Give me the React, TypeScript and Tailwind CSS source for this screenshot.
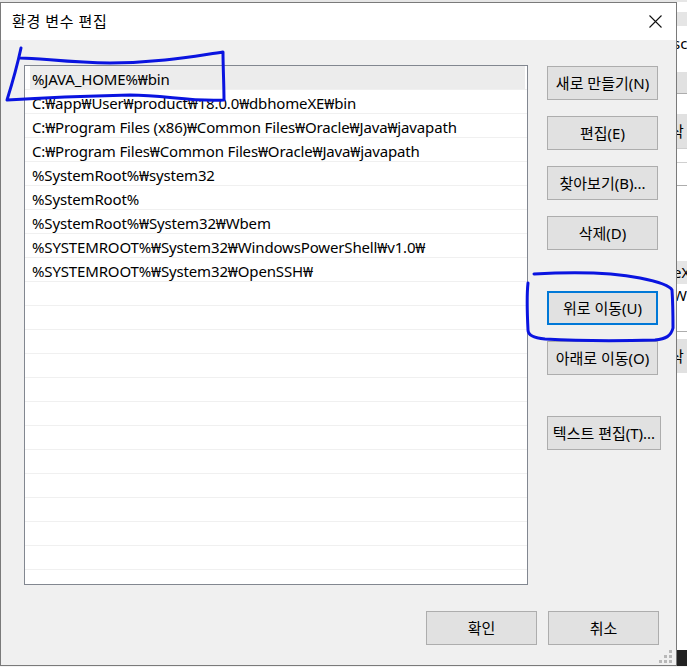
import React from "react";

const items = [
  "%JAVA_HOME%₩bin",
  "C:₩app₩User₩product₩18.0.0₩dbhomeXE₩bin",
  "C:₩Program Files (x86)₩Common Files₩Oracle₩Java₩javapath",
  "C:₩Program Files₩Common Files₩Oracle₩Java₩javapath",
  "%SystemRoot%₩system32",
  "%SystemRoot%",
  "%SystemRoot%₩System32₩Wbem",
  "%SYSTEMROOT%₩System32₩WindowsPowerShell₩v1.0₩",
  "%SYSTEMROOT%₩System32₩OpenSSH₩",
];

const rows = [...items, ...Array(13).fill("")];

function Btn({
  children,
  className = "",
  focused = false,
}: {
  children: React.ReactNode;
  className?: string;
  focused?: boolean;
}) {
  return (
    <button
      className={
        "h-[34px] bg-[#e1e1e1] text-[15px] leading-none text-black flex items-center justify-center whitespace-nowrap " +
        (focused ? "border-2 border-[#0078d7] " : "border border-[#adadad] ") +
        className
      }
    >
      {children}
    </button>
  );
}

export default function App() {
  return (
    <div
      className="relative w-[687px] h-[667px] overflow-hidden bg-[#f3f3f3] text-black"
      style={{ fontFamily: "'Noto Sans', 'Noto Sans CJK KR', sans-serif" }}
    >
      <div className="h-[2px] bg-[#e6e6e6]" />
      <div className="flex">
        {/* dialog */}
        <div className="relative w-[677px] h-[664px] border border-[#7a7a7a] bg-[#f0f0f0] flex flex-col">
          <div className="h-[37px] bg-white flex items-center justify-between">
            <span className="pl-[11px] text-[15px] tracking-[0.6px]">환경 변수 편집</span>
            <svg width="13" height="13" viewBox="0 0 13 13" className="mr-[14px]">
              <path d="M0.5 0.5 L12.5 12.5 M12.5 0.5 L0.5 12.5" stroke="#111" strokeWidth="1.1" fill="none" />
            </svg>
          </div>
          <div className="flex-1 flex flex-col pl-[23px] pt-[25px]">
            <div className="flex">
              <div className="w-[504px] h-[520px] border border-[#828790] bg-white overflow-hidden">
                {rows.map((t, i) => (
                  <div
                    key={i}
                    className="h-[24px] border-b border-[#f0f0f0] pl-[5px] pr-[2px] flex"
                  >
                    <div
                      className={
                        "flex-1 flex items-center pl-[2px] pt-[3px] text-[15px] tracking-[-0.15px] whitespace-nowrap " +
                        (i === 0 ? "bg-[#ececec]" : "")
                      }
                    >
                      {t}
                    </div>
                  </div>
                ))}
              </div>
              <div className="ml-[19px] pt-[1px] flex flex-col">
                <Btn className="w-[111px]">새로 만들기(N)</Btn>
                <Btn className="w-[111px] mt-[16px]">편집(E)</Btn>
                <Btn className="w-[111px] mt-[16px]">찾아보기(B)...</Btn>
                <Btn className="w-[111px] mt-[16px]">삭제(D)</Btn>
                <Btn className="w-[111px] mt-[41px]" focused>
                  위로 이동(U)
                </Btn>
                <Btn className="w-[111px] mt-[16px]">아래로 이동(O)</Btn>
                <Btn className="mt-[41px] w-[114px]">텍스트 편집(T)...</Btn>
              </div>
            </div>
            <div className="mt-[26px] flex justify-end gap-[11px] pr-[17px]">
              <Btn className="w-[111px]">확인</Btn>
              <Btn className="w-[111px]">취소</Btn>
            </div>
          </div>
          {/* size grip */}
          <div className="absolute right-[4px] bottom-[2px] grid grid-cols-3 gap-[2px]">
            <span className="w-[3px] h-[3px]" />
            <span className="w-[3px] h-[3px]" />
            <span className="w-[3px] h-[3px] bg-[#b8b8b8]" />
            <span className="w-[3px] h-[3px]" />
            <span className="w-[3px] h-[3px] bg-[#b8b8b8]" />
            <span className="w-[3px] h-[3px] bg-[#b8b8b8]" />
            <span className="w-[3px] h-[3px] bg-[#b8b8b8]" />
            <span className="w-[3px] h-[3px] bg-[#b8b8b8]" />
            <span className="w-[3px] h-[3px] bg-[#b8b8b8]" />
          </div>
        </div>
        {/* window behind */}
        <div className="flex-1 flex flex-col bg-white text-[15px] leading-none overflow-hidden">
          <div className="h-[10px]" />
          <div className="h-[14px] bg-[#e5e5e5]" />
          <div className="h-[10px]" />
          <div className="h-[18px] -ml-[4px]">sc</div>
          <div className="h-[18px]" />
          <div className="h-[22px] bg-[#e1e1e1] border-b border-[#adadad]" />
          <div className="h-[20px]" />
          <div className="h-[34px] bg-[#e1e1e1] flex items-center -ml-[7px]">삭</div>
          <div className="h-[14px] border-t border-[#d0d0d0]" />
          <div className="h-[23px] border-t border-[#d0d0d0]" />
          <div className="h-[76px] border-t border-[#adadad]" />
          <div className="h-[23px] bg-[#e5e5e5] flex items-center -ml-[4px]">eX</div>
          <div className="h-[23px] flex items-center -ml-[4px]">WS</div>
          <div className="h-[24px]" />
          <div className="h-[8px] border-t border-[#adadad]" />
          <div className="h-[34px] bg-[#e1e1e1] flex items-center -ml-[7px]">삭</div>
          <div className="flex-1 bg-white" />
          <div className="h-[16px] bg-[#222]" />
        </div>
      </div>
      {/* hand-drawn annotations */}
      <svg className="absolute inset-0 pointer-events-none" width="687" height="667">
        <path
          d="M21 48 C18 62 12 84 7 100 C40 98 90 96 130 95 C165 95 190 102 224 100 C224 86 223 66 223 52 C195 56 160 63 110 63 C70 63 40 58 20 58"
          fill="none"
          stroke="#0a14e0"
          strokeWidth="3"
          strokeLinecap="round"
          strokeLinejoin="round"
        />
        <path
          d="M534 274 C570 272 610 272 640 278 C660 282 670 286 672 290 C673 305 673 318 673 328 C671 336 666 339 655 340 C620 341 580 341 545 339 C533 338 528 335 528 330 C527 310 527 292 528 283"
          fill="none"
          stroke="#0a14e0"
          strokeWidth="3"
          strokeLinecap="round"
          strokeLinejoin="round"
        />
      </svg>
    </div>
  );
}
